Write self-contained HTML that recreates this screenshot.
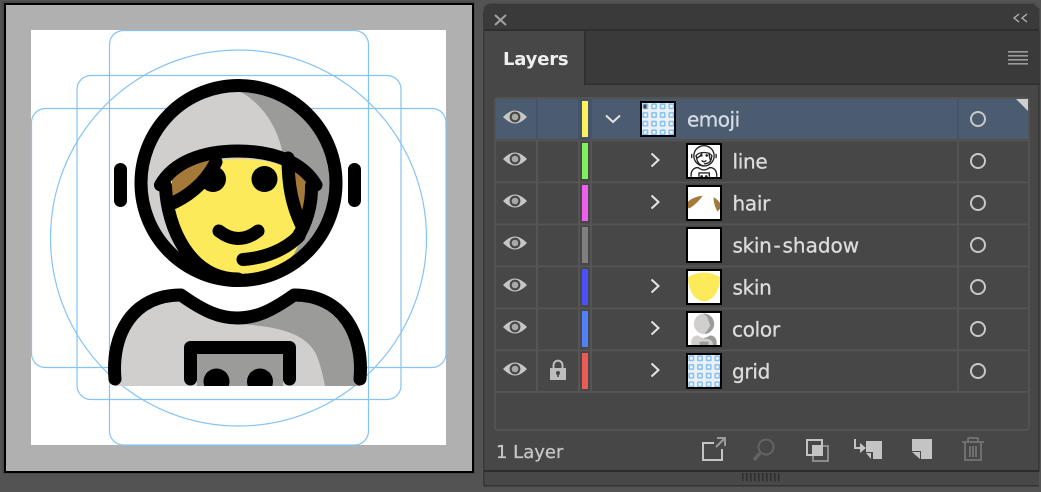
<!DOCTYPE html>
<html><head><meta charset="utf-8"><style>
html,body{margin:0;padding:0;background:#535353;width:1041px;height:492px;overflow:hidden}
svg{display:block}
text{font-family:"DejaVu Sans","Liberation Sans",sans-serif}
.r{font-size:20px;letter-spacing:-.3px;fill:#dcdcdc;stroke:#dcdcdc;stroke-width:.3px}
</style></head><body>
<svg width="1041" height="492" viewBox="0 0 1041 492" xmlns="http://www.w3.org/2000/svg">
<defs>
<pattern id="gp" x="0" y="0" width="8.67" height="8.67" patternUnits="userSpaceOnUse">
<rect width="8.67" height="8.67" fill="#eef0f2"/>
<rect x=".4" y=".4" width="5.900" height="5.900" rx="1" fill="#86c2f3"/>
<rect x="2" y="2" width="2.700" height="2.700" fill="#f2f9ff"/>
</pattern>
<clipPath id="hc"><circle cx="238.5" cy="183" r="97.5"/></clipPath>
<clipPath id="bc"><rect x="100" y="280" width="275" height="106"/></clipPath>
<g id="colorArt">
<circle cx="238.5" cy="183" r="97.5" fill="#d0cfce"/>
<path clip-path="url(#hc)" d="M226 85C262 98 279 128 284 160L300 200L238 290H345V80H226Z" fill="#9b9b9a"/>
<g clip-path="url(#bc)">
<path d="M115 390V365C115 325 135 295 181 295C205 312 220 318 237.5 318C255 318 270 312 294 295C340 295 360 325 360 365V390Z" fill="#d0cfce"/>
<path d="M238 324C275 326 305 332 316 354C321 366 323 376 325 386H360V365C360 325 340 295 294 295C270 312 255 318 238 318Z" fill="#9b9b9a"/>
<rect x="197" y="354" width="86" height="34" fill="#9b9b9a"/>
</g>
</g>
<g id="skinArt"><path d="M166 186C167 228 190 279 238 279C262 279 282 268 294 254L305 232L311 186C290 150 190 150 166 186Z" fill="#fcea5b"/></g>
<g id="hairArt">
<path d="M172 200V178C182 170 195 163 212 158C208 178 185 192 172 200Z" fill="#a57939"/>
<path d="M295 170L306 178V213L302 218C297 205 295 190 295 170Z" fill="#a57939"/>
</g>
<g id="lineArt" fill="none" stroke="#000" stroke-width="13" stroke-linecap="round" stroke-linejoin="round">
<circle cx="238.5" cy="183" r="97.5"/>
<path d="M165.500 186C167 228 190 279 238 279"/>
<path d="M311.500 186C312 205 306 225 297 238"/>
<path d="M160.500 185C173 163 201 151 238 151C275 151 303 163 316 185"/>
<path d="M168 205C186 198 205 184 216 162"/>
<path d="M288 158C288 185 292 205 301 224"/>
<path d="M219 231Q238.500 246 258 231"/>
<path d="M243 259.500C265 258 285 250 299 236"/>
<path d="M120.500 169.500V200.500M354.500 169.500V200.500"/>
<path d="M115 379C111 335 132 295 181 295C205 312 220 318 237.500 318C255 318 270 312 294 295C343 295 364 335 360 379"/>
<path d="M190.500 379V347.500H289.500V379"/>
<g clip-path="url(#bc)" fill="#000" stroke="none"><circle cx="216.500" cy="381.500" r="13"/><circle cx="260" cy="381.500" r="13"/></g>
<circle cx="213" cy="179" r="13" fill="#000" stroke="none"/>
<circle cx="264.500" cy="179" r="13" fill="#000" stroke="none"/>
</g>
<g id="eye">
<path d="M-12 0C-7 -5 -3 -6.500 0 -6.500C3 -6.500 7 -5 12 0C7 5 3 6.500 0 6.500C-3 6.500 -7 5 -12 0Z" fill="#c6c6c6"/>
<circle r="5.400" fill="#474747"/><circle r="3.300" fill="#a8a8a8"/>
</g>
<path id="chev" d="M-3.500 -6.500L3.500 0L-3.500 6.500" fill="none" stroke="#e4e4e4" stroke-width="2"/>
<circle id="tgt" r="7" fill="none" stroke="#c8c8c8" stroke-width="2"/>
</defs>

<!-- background & canvas -->
<rect width="1041" height="492" fill="#535353"/>
<rect x="2" y="1" width="473" height="473" fill="#4a4a4a"/>
<rect x="4" y="3" width="470" height="470" fill="#000"/>
<rect x="6" y="5" width="466" height="466" fill="#b0b0b0"/>
<rect x="31" y="30" width="415" height="415" fill="#fff"/>
<g fill="none" stroke="#86c3f5" stroke-width="1.200">
<rect x="109.500" y="30.500" width="259" height="414.500" rx="14"/>
<rect x="77" y="75.500" width="324" height="324" rx="14"/>
<rect x="31.500" y="108.500" width="414.500" height="259" rx="14"/>
<circle cx="238.500" cy="238" r="188"/>
</g>
<use href="#colorArt"/><use href="#skinArt"/><use href="#hairArt"/><use href="#lineArt"/>

<!-- panel -->
<path d="M483 12Q483 3 492 3H1034L1040 9V472H483Z" fill="#474747"/>
<path d="M484 29V11Q484 4 492 4H1033L1039 9V29Z" fill="#3a3a3a"/>
<rect x="484" y="29" width="555" height="2" fill="#2f2f2f"/>
<rect x="584" y="31" width="456" height="53" fill="#3a3a3a"/>
<rect x="484" y="31" width="100" height="54" fill="#474747"/>
<rect x="584" y="31" width="1.500" height="54" fill="#2f2f2f"/>
<rect x="584" y="83.500" width="456" height="1.500" fill="#2f2f2f"/>
<rect x="483" y="12" width="1.500" height="460" fill="#383838"/>
<rect x="1038" y="85" width="1.500" height="387" fill="#383838"/>
<path d="M495 15L506 25M506 15L495 25" stroke="#a2a2a2" stroke-width="2" fill="none"/>
<path d="M1019 14L1014 18L1019 22M1027 14L1022 18L1027 22" stroke="#b4b4b4" stroke-width="1.300" fill="none"/>
<g fill="#9c9c9c"><rect x="1008" y="51" width="20" height="1.600"/><rect x="1008" y="55" width="20" height="1.600"/><rect x="1008" y="59" width="20" height="1.600"/><rect x="1008" y="63" width="20" height="1.600"/></g>
<text x="503" y="65" font-weight="700" fill="#efefef" style="font-size:18px;letter-spacing:-.2px">Layers</text>

<!-- list box -->
<rect x="495" y="98" width="534" height="332" rx="3" fill="none" stroke="#575757" stroke-width="1.500"/>
<rect x="496" y="99" width="532" height="40" fill="#4b5b70"/>
<g fill="#555">
<rect x="496" y="139.500" width="532" height="1.800"/><rect x="496" y="181.500" width="532" height="1.800"/><rect x="496" y="223.500" width="532" height="1.800"/><rect x="496" y="265.500" width="532" height="1.800"/><rect x="496" y="307.500" width="532" height="1.800"/><rect x="496" y="349.500" width="532" height="1.800"/><rect x="496" y="391" width="532" height="1.800"/>
<rect x="536" y="141" width="2" height="250"/><rect x="578" y="141" width="2" height="250"/><rect x="590" y="141" width="2" height="250"/><rect x="957" y="141" width="1.800" height="250"/>
</g>
<rect x="536" y="99" width="2" height="40" fill="#44536a"/><rect x="578" y="99" width="14" height="40" fill="#44536a"/><rect x="957" y="99" width="1.800" height="40" fill="#44536a"/>
<path d="M1016 99H1028V111Z" fill="#cfcfcf"/>

<!-- swatches -->
<rect x="582" y="101" width="6" height="36" fill="#fdf25d"/>
<rect x="582" y="143" width="6" height="36" fill="#7df25d"/>
<rect x="582" y="185" width="6" height="36" fill="#ee5fee"/>
<rect x="582" y="227" width="6" height="36" fill="#7f7f7f"/>
<rect x="582" y="269" width="6" height="36" fill="#4a50fa"/>
<rect x="582" y="311" width="6" height="36" fill="#5080fa"/>
<rect x="582" y="353" width="6" height="36" fill="#ee5a55"/>

<!-- eyes -->
<use href="#eye" x="515" y="117"/><use href="#eye" x="515" y="159"/><use href="#eye" x="515" y="201"/><use href="#eye" x="515" y="243"/><use href="#eye" x="515" y="285"/><use href="#eye" x="515" y="327"/><use href="#eye" x="515" y="369"/>

<!-- targets -->
<use href="#tgt" x="978" y="119"/><use href="#tgt" x="978" y="161"/><use href="#tgt" x="978" y="203"/><use href="#tgt" x="978" y="245"/><use href="#tgt" x="978" y="287"/><use href="#tgt" x="978" y="329"/><use href="#tgt" x="978" y="371"/>

<!-- chevrons -->
<path d="M606 115.500L613 122L620 115.500" fill="none" stroke="#e4e4e4" stroke-width="2"/>
<use href="#chev" x="655" y="160"/><use href="#chev" x="655" y="202"/><use href="#chev" x="655" y="286"/><use href="#chev" x="655" y="328"/><use href="#chev" x="655" y="370"/>

<!-- lock -->
<path d="M553.500 369V365.500C553.500 359 562.500 359 562.500 365.500V369" fill="none" stroke="#bdbdbd" stroke-width="2"/>
<rect x="550" y="368" width="16" height="12" fill="#bdbdbd"/>
<circle cx="558" cy="373" r="2" fill="#474747"/><rect x="557.200" y="373" width="1.600" height="4" fill="#474747"/>

<!-- thumbs -->
<g>
<rect x="640" y="101" width="36" height="36" fill="#000"/>
<svg x="642" y="103" width="32" height="32" viewBox="0 0 32 32"><rect width="32" height="32" fill="url(#gp)"/><path d="M1.500 1.500H4.500V5.500H1.500Z" fill="#444"/></svg>
<rect x="686" y="143" width="36" height="36" fill="#000"/>
<svg x="688" y="145" width="32" height="32" viewBox="85 79 307 307"><rect x="85" y="79" width="307" height="307" fill="#fff"/><use href="#lineArt" opacity=".85"/></svg>
<rect x="686" y="185" width="36" height="36" fill="#000"/>
<svg x="688" y="187" width="32" height="32" viewBox="0 0 100 100"><rect width="100" height="100" fill="#fff"/><path d="M46 27C28 29 10 36 0 46V65L4 67C20 58 36 42 46 27Z" fill="#a57939"/><path d="M80 32C88 36 96 44 100 50V68L92 77C84 62 80 48 80 32Z" fill="#a57939"/></svg>
<rect x="686" y="227" width="36" height="36" fill="#000"/>
<rect x="688" y="229" width="32" height="32" fill="#fff"/>
<rect x="686" y="269" width="36" height="36" fill="#000"/>
<svg x="688" y="271" width="32" height="32" viewBox="0 0 100 100"><rect width="100" height="100" fill="#fff"/><path d="M0 20C25 0 75 0 100 20C100 65 75 95 50 95C25 95 0 65 0 20Z" fill="#fcea5b"/></svg>
<rect x="686" y="311" width="36" height="36" fill="#000"/>
<svg x="688" y="313" width="32" height="32" viewBox="85 79 307 307"><rect x="85" y="79" width="307" height="307" fill="#fff"/><use href="#colorArt"/></svg>
<rect x="686" y="353" width="36" height="36" fill="#000"/>
<svg x="688" y="355" width="32" height="32" viewBox="0 0 32 32"><rect width="32" height="32" fill="url(#gp)"/></svg>
</g>

<!-- labels -->
<text class="r" x="687" y="126.500" style="fill:#d3dbe6;stroke:#d3dbe6;letter-spacing:-.5px">emoji</text>
<text class="r" x="732.500" y="168.500">line</text>
<text class="r" x="732.500" y="210.500">hair</text>
<text class="r" x="732.500" y="252.500">skin<tspan dx="2">-</tspan><tspan dx="2" style="letter-spacing:0">shadow</tspan></text>
<text class="r" x="732.500" y="294.500">skin</text>
<text class="r" x="732" y="336.500">color</text>
<text class="r" x="732" y="378.500">grid</text>

<!-- footer -->
<text x="496" y="458" style="font-size:18px;fill:#c8c8c8;stroke:#c8c8c8;stroke-width:.25px">1 Layer</text>
<path d="M714 443H703V460H722V449" fill="none" stroke="#c4c4c4" stroke-width="2"/>
<path d="M716 447L725 438M717 438H725V446" fill="none" stroke="#9a9a9a" stroke-width="2"/>
<circle cx="766" cy="447" r="7.500" fill="none" stroke="#636363" stroke-width="2"/>
<path d="M760 453L754 460" stroke="#636363" stroke-width="3.500"/>
<rect x="813" y="446" width="15" height="15" fill="none" stroke="#8c8c8c" stroke-width="2"/>
<rect x="807" y="440" width="15" height="15" fill="none" stroke="#c4c4c4" stroke-width="2"/>
<rect x="812" y="445" width="10" height="10" fill="#c4c4c4"/>
<path d="M855 439V448H862" fill="none" stroke="#c4c4c4" stroke-width="2"/>
<path d="M860 443L866 448L860 453Z" fill="#c4c4c4"/>
<path d="M866 441H882V459H873V452H866Z" fill="#c4c4c4"/>
<path d="M866 453H871V459Z" fill="#c4c4c4"/>
<path d="M912 439H932V459H921V451H912Z" fill="#c4c4c4"/>
<path d="M912 452H920V459Z" fill="#c4c4c4"/>
<g fill="none" stroke="#6f6f6f" stroke-width="2">
<path d="M962 442H984M968 442V439Q968 438 969 438H977Q978 438 978 439V442"/>
<path d="M965 442V460H981V442"/>
<path d="M970 446V457M973 446V457M976 446V457"/>
</g>
<rect x="484" y="470" width="555" height="2" fill="#2c2c2c"/>
<rect x="484" y="472" width="555" height="13" fill="#484848"/>
<rect x="484" y="485" width="555" height="1.500" fill="#333"/>
<rect x="483" y="472" width="1.500" height="14" fill="#383838"/>
<g fill="#2e2e2e">
<rect x="742" y="473" width="1.500" height="8"/><rect x="746" y="473" width="1.500" height="8"/><rect x="750" y="473" width="1.500" height="8"/><rect x="754" y="473" width="1.500" height="8"/><rect x="758" y="473" width="1.500" height="8"/><rect x="762" y="473" width="1.500" height="8"/><rect x="766" y="473" width="1.500" height="8"/><rect x="770" y="473" width="1.500" height="8"/><rect x="774" y="473" width="1.500" height="8"/><rect x="778" y="473" width="1.500" height="8"/>
</g>
</svg>
</body></html>
